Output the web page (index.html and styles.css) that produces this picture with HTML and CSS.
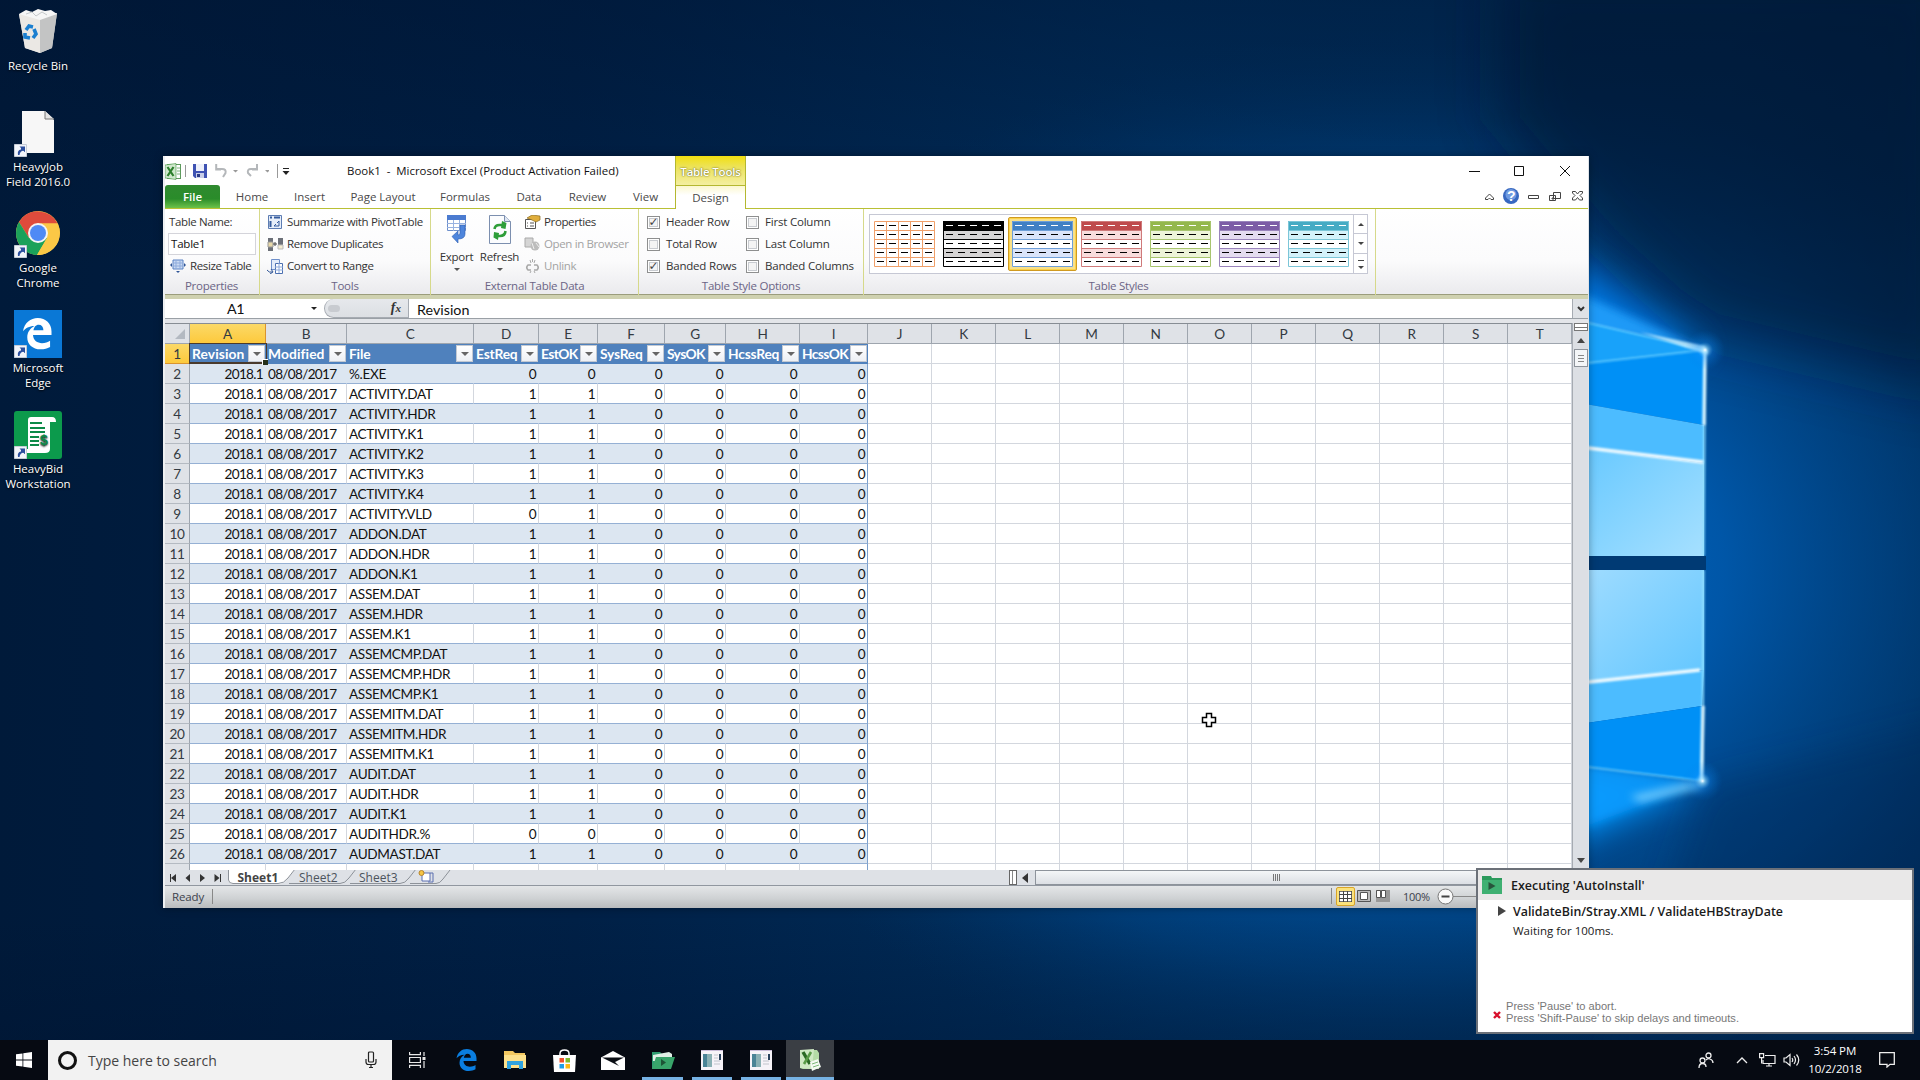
FILE: index.html
```html
<!DOCTYPE html>
<html lang="en">
<head>
<meta charset="utf-8">
<title>Desktop</title>
<link rel="stylesheet" href="styles.css">
</head>
<body>
<svg class="wallpaper" viewBox="0 0 1920 1080" preserveAspectRatio="none">
  <defs>
    <linearGradient id="base" x1="0" x2="1" y1="0" y2="0"><stop offset="0" stop-color="#001a3a"/><stop offset=".3" stop-color="#002046"/><stop offset=".6" stop-color="#002e5c"/><stop offset=".9" stop-color="#00305e"/><stop offset="1" stop-color="#002a54"/></linearGradient>
    <radialGradient id="glow" gradientUnits="userSpaceOnUse" cx="0" cy="0" r="1" gradientTransform="translate(1400 570) scale(720 540)"><stop offset="0" stop-color="#0078e0"/><stop offset=".45" stop-color="#0060ba" stop-opacity=".8"/><stop offset=".75" stop-color="#004c94" stop-opacity=".45"/><stop offset="1" stop-color="#003468" stop-opacity="0"/></radialGradient>
    <linearGradient id="top" x1="0" x2="0" y1="0" y2="1"><stop offset="0" stop-color="#00122e" stop-opacity=".4"/><stop offset=".25" stop-color="#00122e" stop-opacity="0"/><stop offset=".85" stop-color="#00122e" stop-opacity="0"/><stop offset="1" stop-color="#00122e" stop-opacity=".4"/></linearGradient>
    <radialGradient id="spark"><stop offset="0" stop-color="#fff"/><stop offset=".12" stop-color="#9fe0ff" stop-opacity=".7"/><stop offset=".4" stop-color="#1090ff" stop-opacity=".3"/><stop offset="1" stop-color="#0078e0" stop-opacity="0"/></radialGradient>
    <linearGradient id="paleA" x1="0" x2="1" y1="0" y2="1"><stop offset="0" stop-color="#66c8ff"/><stop offset="1" stop-color="#a6e0ff"/></linearGradient>
    <linearGradient id="paleB" x1="0" x2="1" y1="0" y2="1"><stop offset="0" stop-color="#a0dcff"/><stop offset="1" stop-color="#62c6ff"/></linearGradient>
    <filter id="b30" x="-50%" y="-50%" width="200%" height="200%"><feGaussianBlur stdDeviation="30"/></filter>
    <filter id="b20" x="-50%" y="-50%" width="200%" height="200%"><feGaussianBlur stdDeviation="16"/></filter>
    <filter id="b6" x="-50%" y="-50%" width="200%" height="200%"><feGaussianBlur stdDeviation="4"/></filter>
    <filter id="b1"><feGaussianBlur stdDeviation=".8"/></filter>
  </defs>
  <rect width="1920" height="1080" fill="url(#base)"/>
  <rect width="1920" height="1080" fill="url(#glow)"/>
  <rect width="1920" height="1080" fill="url(#top)"/>
  <path d="M1700 330 1960 392V-40L1500-40V120L1600 240Z" fill="#001530" opacity=".6" filter="url(#b30)"/>
  <path d="M1705 785 1960 722V900L1600 1080Z" fill="#002c5c" opacity=".4" filter="url(#b20)"/>
  <path d="M1480 200 1705 350 1480 370Z" fill="#0088ff" opacity=".7" filter="url(#b20)"/>
  <path d="M1480 880 1695 785 1480 750Z" fill="#0098ff" filter="url(#b20)"/>
  <path d="M1560 285 1705 350 1560 325Z" fill="#28a4ff" opacity=".8" filter="url(#b6)"/>
  <path d="M1560 762 1703 782 1560 836Z" fill="#0a9cff" opacity=".8" filter="url(#b6)"/>
  <path d="M1630 796 1703 780 1700 788 1640 802Z" fill="#8ad8ff" opacity=".8" filter="url(#b6)"/>
  <path d="M1580 321 1705 350 1704 425 1580 403Z" fill="#0090f6"/>
  <path d="M1580 321 1705 350 1580 364Z" fill="#18a2fa"/>
  <path d="M1580 403 1704 425V463L1580 447Z" fill="#4cbcff"/>
  <path d="M1580 447 1704 463V556H1580Z" fill="url(#paleA)"/>
  <path d="M1580 570H1704V670L1580 683Z" fill="url(#paleB)"/>
  <path d="M1580 683 1704 670 1702 706 1580 724Z" fill="#4cbcff"/>
  <path d="M1580 724 1702 706V781L1580 765Z" fill="#0090f6"/>
  <g fill="none" filter="url(#b1)"><path d="M1580 447 1703 462M1580 683 1700 670" stroke="#f0fbff" stroke-width="3.500"/>
  <path d="M1580 321 1705 350 1580 364M1580 766 1703 781" stroke="#6cd0ff" stroke-width="1.500"/>
  <path d="M1705 350 1703.500 556M1703.500 570 1702.500 781" stroke="#90e0ff" stroke-width="2"/>
  <path d="M1705 350 1704 425M1703 706 1701.500 781" stroke="#d8f6ff" stroke-width="3.500"/></g>
  <path d="M1580 556H1706V570H1580Z" fill="#003a74"/>
  <path d="M1640 332 1705 346 1708 354 1690 349Z" fill="#c8f0ff" filter="url(#b1)" opacity=".8"/>
  <circle cx="1705" cy="350" r="20" fill="url(#spark)"/><circle cx="1702.500" cy="781" r="20" fill="url(#spark)"/>
</svg>

<main class="desktop">
  <nav class="shortcuts">
    <div class="shortcut">
      <svg class="big" viewBox="0 0 48 48"><path d="M5 6 43 5 38 40 26 45 11 40Z" fill="#d9d9d8"/><path d="M5 6 26 10 26 45 11 40Z" fill="#ebe8e4"/><path d="M26 10 43 5 38 40 26 45Z" fill="#c3c4c4"/><path d="M5 6 12 2 18 4 24 1 31 3 37 2 43 6 26 12Z" fill="#f6f6f6"/><path d="m12 6 6-2 4 4 6-4 5 3" stroke="#c4c8ca" fill="none"/><g fill="none" stroke="#1b7fd0" stroke-width="3.600"><path d="m12 22 3-4 4 1"/><path d="m20 21 2 5-3 4"/><path d="m16 30-5-1 0-4"/></g></svg>
      <span>Recycle Bin</span></div>
    <div class="shortcut">
      <svg class="big" viewBox="0 0 48 48"><path d="M8 2H31L40 11V44H8Z" fill="#f7f7f7"/><path d="M31 2V10H40" fill="#e4e4e4" stroke="#777"/><use href="#arrow"/></svg>
      <span>HeavyJob<br>Field 2016.0</span></div>
    <div class="shortcut">
      <svg class="big" viewBox="0 0 48 48"><circle cx="24" cy="23" r="22" fill="#fbc846"/><path d="M5 12A22 22 0 0 1 43.500 13.500H24L15 28Z" fill="#de4b3c"/><path d="M5 12A22 22 0 0 0 23 45L33 28 15 28Z" fill="#1ba15a"/><path d="M23 45A22 22 0 0 0 43.500 13.500H24A10 10 0 0 1 33 28Z" fill="#fbc846"/><circle cx="24" cy="23" r="10" fill="#f4f4f4"/><circle cx="24" cy="23" r="8" fill="#4f8af5"/><use href="#arrow"/></svg>
      <span>Google<br>Chrome</span></div>
    <div class="shortcut">
      <svg class="big" viewBox="0 0 48 48"><path d="M0 0H48V48H0Z" fill="#0a78d6"/><path transform="translate(9 8) scale(.95)" d="M0 14C1.500 5 8 0 15.500 0 24 0 30 6 30 14V18H10.500C11 24 15 26.500 20 26.500 23.500 26.500 26 25.500 28.500 24V30.500C25.500 32 22.500 33 18.500 33 10 33 4.500 27.500 4.500 20.500 4.500 15 7.500 11 12 8.500 6.500 8.500 2.500 11 0 14ZM11 13H21.500C21.500 9 19.500 7 16.500 7 13.500 7 11.500 9.500 11 13Z" fill="#fff"/><use href="#arrow"/></svg>
      <span>Microsoft<br>Edge</span></div>
    <div class="shortcut">
      <svg class="big" viewBox="0 0 48 48"><rect width="48" height="48" rx="3" fill="#0c9a4c"/><path d="M13 6H38Q42 6 42 11H36V38Q36 42 31 42H12V38H14V9Q14 6 17 6Z" fill="#fff"/><path d="M16 12H28M16 17H31M16 21H31M16 26H25M16 30H25M16 34H25" stroke="#0c8a48" stroke-width="1.800"/><text x="26" y="34" class="dollar">$</text><use href="#arrow"/></svg>
      <span>HeavyBid<br>Workstation</span></div>
  </nav>

  <section class="excel">
    <header class="titlebar">
      <div class="quick">
        <svg width="17" height="17" viewBox="0 0 17 17"><rect x="2.500" y="1.500" width="13" height="14" fill="#fff" stroke="#5d9a5d"/><path d="M0 2 11 .5V16.500L0 15Z" fill="#cfe8cc" stroke="#3c8f3c" stroke-width=".6"/><path d="m2.500 4 6 9M8.500 4l-6 9" stroke="#2c7f2c" stroke-width="2.200"/><path d="M12 5h3M12 8h3M12 11h3" stroke="#7cb57c"/></svg>
        <i class="bar"></i>
        <svg class="save" width="14" height="14" viewBox="0 0 14 14"><path d="M0 0H14V14H2L0 12Z" fill="#3f53b3"/><path d="M3 0H11V7H3Z" fill="#eef1fb"/><path d="M3 9H11V14H3Z" fill="#c9cfe8"/><path d="M4 10H7V13H4Z" fill="#2b3a86"/></svg>
        <svg class="undo" width="54" height="14" viewBox="0 0 54 14"><g fill="none" stroke="#b4b7ba" stroke-width="2"><path d="M2 5H7Q11.500 5 10.500 9L8 13"/><path d="M1.200 0V5.500H6"/><path d="M41 5H36Q32 5 33 9L36 12"/><path d="M42 0V5.500H37"/></g><path d="M18 6h5l-2.500 2.500ZM50 6h5l-2.500 2.500Z" fill="#999"/></svg>
        <i class="bar"></i>
        <svg class="cust" width="8" height="8" viewBox="0 0 8 8"><path d="M1 .5H7" stroke="#222"/><path d="M.5 3h7L4 7Z" fill="#222"/></svg>
      </div>
      <div class="doc-title">Book1&nbsp; -&nbsp; Microsoft Excel (Product Activation Failed)</div>
      <div class="tool-tab">Table Tools</div>
      <svg class="win-btns" width="100" height="12" viewBox="0 0 100 12"><g fill="none" stroke="#111"><path d="M0 6.500H11"/><path d="M45.500 1.500h9v9h-9Z"/><path d="m91 1 10 10M101 1 91 11"/></g></svg>
    </header>
    <nav class="tabs">
      <b class="file">File</b><span class="t-home">Home</span><span class="t-ins">Insert</span><span class="t-page">Page Layout</span><span class="t-form">Formulas</span><span class="t-data">Data</span><span class="t-rev">Review</span><span class="t-view">View</span><span class="t-design">Design</span>
      <svg class="doc-btns" width="100" height="18" viewBox="0 0 100 18"><g fill="none" stroke="#444"><path d="m1.500 10 4-4 4 4v1.500h-2.500l-1.500-1.500-1.500 1.500h-2.500Z"/><path d="M44.500 7.500h10v3h-10Z"/><path d="M69.500 4.500h7v6h-7ZM65.500 7.500h6v5h-6ZM68 10h2v1h-2Z"/><path d="M88.500 3.500h3l2 2.500 2-2.500h3v1.500l-2.500 2.500 2.500 2.500v2h-3l-2-2.500-2 2.500h-3v-2l2.500-2.500-2.500-2.500Z"/></g><circle cx="27" cy="8" r="8" fill="#3868c0"/><circle cx="27" cy="6.500" r="5.500" fill="#6f9ae0"/><text x="23" y="13" class="q">?</text></svg>
    </nav>

    <div class="ribbon">
      <div class="group g-prop">
        <div class="col"><span>Table Name:</span><span class="field">Table1</span>
          <span class="cmd"><svg width="16" height="14" viewBox="0 0 16 14"><path d="M3 1H13V10H3Z" fill="#c9d9f2" stroke="#5b82c4"/><path d="M3 4H13M3 7H13M6 1V10M10 1V10" stroke="#8fabdc"/><path d="M0 6 2 4V8ZM16 6 14 4V8ZM8 14 6 12H10Z" fill="#2f5597"/></svg>Resize Table</span></div>
        <footer>Properties</footer>
      </div>
      <div class="group g-tools">
        <div class="col">
          <span class="cmd"><svg width="17" height="14" viewBox="-1 0 17 14"><path d="M.5.500h13v13h-13Z" fill="#e7eef9" stroke="#5d7db3"/><path d="M2 2.500h2M6 2.500h6M2.500 6v6" stroke="#345a9c" stroke-width="2"/><path d="M6 11h5V6M6 11l2-2M11 6 9 8" stroke="#345a9c" fill="none"/></svg>Summarize with PivotTable</span>
          <span class="cmd"><svg width="17" height="15" viewBox="0 0 17 15"><path d="M1 1H6V5H1ZM1 10H6V14H1Z" fill="#6c7078"/><path d="M1 5H6V10H1Z" fill="#e8d8a8" stroke="#999"/><path d="M11 1H16V8H11Z" fill="#6c7078"/><path d="M11 8H16V12H11Z" fill="#f4ecd0" stroke="#bbb"/><path d="M6 7H10M8 5V9" stroke="#444"/></svg>Remove Duplicates</span>
          <span class="cmd"><svg width="17" height="15" viewBox="0 0 17 15"><path d="M4.500.500h8v10h-8Z" fill="#e3ecfa" stroke="#6e8fca"/><path d="M8.500 4.500h7v10h-7Z" fill="#fff" stroke="#4b6fb0"/><path d="M8 8h8M8 11h8M12 4v10" stroke="#8fabdc"/><path d="M0 11q2 3 5 2M4 10l2 3-3 2" stroke="#2f5597" fill="none"/></svg>Convert to Range</span></div>
        <footer>Tools</footer>
      </div>
      <div class="group g-ext">
        <div class="row">
          <div class="large"><svg width="20" height="29" viewBox="0 0 20 29"><path d="M.5.500h18v15h-18Z" fill="#fff" stroke="#6d8fcb"/><path d="M0 0H19V5H0Z" fill="#4b7bd0"/><path d="M0 8.500H19M0 12.500H19M6.500 5V16M12.500 5V16" stroke="#98b2e0"/><path d="M13 10H18V19Q18 24 11 24V28L5 21.500 11 16V20Q13 20 13 18Z" fill="#4f86dc" stroke="#2c5cb0" stroke-width=".6"/></svg><span>Export</span><i class="dd"></i></div>
          <div class="large"><svg width="22" height="29" viewBox="0 0 22 29"><path d="M.5.500h15l6 6v22h-21Z" fill="#fbfcfe" stroke="#7c8faf"/><path d="M15.500.500v6h6" fill="#dfe7f3" stroke="#7c8faf"/><g fill="none" stroke="#2e9e3a" stroke-width="2.600"><path d="M5.500 14Q6 10 10.500 10H14"/><path d="M16.500 16Q16 21 11 21H8"/></g><path d="M13 6 17.500 8 16.500 14 12 13ZM9 25 4.500 22.500 5 17 10 18Z" fill="#2e9e3a"/></svg><span>Refresh</span><i class="dd"></i></div>
          <div class="col">
            <span class="cmd"><svg width="17" height="14" viewBox="0 0 17 14"><path d="M1.500 4.500h10v9h-10Z" fill="#fff" stroke="#555"/><path d="M3 8h1M6 8h4M3 11h1M6 11h4" stroke="#555"/><path d="M3 3 8 0 16 1V5L12 7 8 5Z" fill="#e0ae3c" stroke="#8a6a20" stroke-width=".7"/></svg>Properties</span>
            <span class="cmd off"><svg width="17" height="15" viewBox="0 0 17 15"><path d="M1 1H9V10H1Z" fill="#d5d5d5" stroke="#aaa"/><circle cx="11" cy="9" r="4.500" fill="#bcbcbc"/><path d="m8 6 2 6M12 6l3 4" stroke="#eee"/></svg>Open in Browser</span>
            <span class="cmd off"><svg width="17" height="15" viewBox="0 0 17 15"><g fill="none" stroke="#a8a8a8" stroke-width="1.600"><path d="M7 6H4Q1.500 8.500 4 11H7M10 6H13Q15.500 8.500 13 11H10"/><path d="M6 1 7 4M11 1 10 4M6 14 7 12M11 14 10 12M8.500 0V3" stroke-width="1"/></g></svg>Unlink</span></div>
        </div>
        <footer>External Table Data</footer>
      </div>
      <div class="group g-opt">
        <div class="row">
          <div class="col"><span class="chk"><i class="on">✓</i>Header Row</span><span class="chk"><i></i>Total Row</span><span class="chk"><i class="on">✓</i>Banded Rows</span></div>
          <div class="col"><span class="chk"><i></i>First Column</span><span class="chk"><i></i>Last Column</span><span class="chk"><i></i>Banded Columns</span></div>
        </div>
        <footer>Table Style Options</footer>
      </div>
      <div class="group g-styles">
        <div class="gallery">
          <div class="thumbs" id="thumbs"></div>
          <div class="steps"><i class="up"></i><i class="down"></i><i class="more"></i></div>
        </div>
        <footer>Table Styles</footer>
      </div>
    </div>

    <div class="formula">
      <div class="namebox"><span>A1</span><i class="dd"></i></div>
      <div class="fx"><i class="knob"></i><em>f<small>x</small></em></div>
      <div class="value">Revision</div>
      <div class="expand"><svg width="8" height="6" viewBox="0 0 8 6"><path d="m1 1 3 3 3-3" fill="none" stroke="#333" stroke-width="2"/></svg></div>
    </div>

    <div class="body">
      <div class="sheet" id="sheet"></div>
      <div class="vscroll"><i class="split"></i><i class="tri up"></i><i class="vthumb"></i><i class="tri down"></i></div>
    </div>

    <div class="sheetbar">
      <svg width="52" height="8" viewBox="0 0 52 8"><path d="M.500 0V8M50.500 0V8" stroke="#333"/><path d="M6 0V8L1 4ZM20 0V8L15.500 4ZM30 0V8L35 4ZM44.500 0V8L49.500 4Z" fill="#333"/></svg>
      <svg class="sheet-tabs" width="228" height="16" viewBox="0 0 228 16"><path d="M0 0H67L61 8Q56 15 50 15H4Q1 15 0 10Z" fill="#fff"/><g fill="none" stroke="#8d9299"><path d="M.5 0V11Q1 14.500 5 14.500H50Q56 14.500 60 9L67 0M61 14.500H112Q117 14.500 121 9L128 0M122 14.500H172Q177 14.500 181 9L188 0M182 14.500H208Q212 14.500 215 10L222 1"/></g>
        <path d="M194 4H202V12H194Z" fill="#fff" stroke="#5a6fb0"/><path d="M200 13H205V4H202" stroke="#5a6fb0" fill="none"/><circle cx="193.500" cy="4" r="2.500" fill="#f6c544" stroke="#b8862b"/>
        <text x="9.500" y="12.500" class="s1">Sheet1</text><text x="71" y="12.500" class="s2">Sheet2</text><text x="131" y="12.500" class="s2">Sheet3</text></svg>
      <div class="hscroll"><i class="hsplit"></i><i class="left"></i><i class="hthumb"><b></b></i></div>
    </div>

    <footer class="status">
      <span class="ready">Ready</span>
      <div class="views">
        <i class="vbtn"><svg width="13" height="11" viewBox="0 0 13 11"><path d="M0 0H13V11H0Z" fill="#fff" stroke="#444" stroke-width="1.600"/><path d="M0 3.500H13M0 7.500H13M4.500 0V11M8.500 0V11" stroke="#444"/></svg></i>
        <svg width="14" height="12" viewBox="0 0 14 12"><path d="M.5.500h13v11h-13Z" fill="#bbb" stroke="#555"/><path d="M3.500 2.500h7v7h-7Z" fill="#fff" stroke="#555"/></svg>
        <svg width="14" height="12" viewBox="0 0 14 12"><path d="M0 0H14V12H0Z" fill="#999"/><path d="M.5.500h4v7h-4ZM5.500.500h4v7h-4Z" fill="#fff" stroke="#555"/></svg>
        <span>100%</span>
        <svg width="62" height="17" viewBox="0 0 62 17"><path d="M16 8.500H62" stroke="#888"/><circle cx="8.500" cy="8.500" r="7.500" fill="#fafafa" stroke="#777"/><path d="M4.500 8.500h8" stroke="#444" stroke-width="2"/></svg>
      </div>
    </footer>
  </section>

  <svg class="cursor" viewBox="0 0 16 16"><path d="M5.500 1.500h5v4h4v5h-4v4h-5v-4h-4v-5h4Z" fill="#fff" stroke="#000" stroke-width="1.500"/></svg>

  <aside class="toast">
    <header><svg width="20" height="18" viewBox="0 0 20 18"><path d="M0 0H9L10 2H20V18H0Z" fill="#2c9a5c"/><path d="M0 4H20V18H0Z" fill="#3fb072"/><path d="M6.500 6v8l7-4Z" fill="#28543c"/></svg>Executing 'AutoInstall'</header>
    <div class="task"><i></i><div><strong>ValidateBin/Stray.XML / ValidateHBStrayDate</strong><p>Waiting for 100ms.</p></div></div>
    <div class="hint"><svg width="8" height="8" viewBox="0 0 8 8"><path d="m1 1 6 6M7 1 1 7" stroke="#d8102c" stroke-width="2.400"/></svg><p>Press 'Pause' to abort.<br>Press 'Shift-Pause' to skip delays and timeouts.</p></div>
  </aside>
</main>

<footer class="taskbar">
  <div class="start"><svg width="16" height="16" viewBox="0 0 16 16"><path d="M0 2.300 6.500 1.400V7.600H0ZM7.300 1.300 16 0V7.600H7.300ZM0 8.400H6.500V14.600L0 13.700ZM7.300 8.400H16V16L7.300 14.700Z" fill="#fff"/></svg></div>
  <div class="search"><i class="ring"></i><span>Type here to search</span>
    <svg width="12" height="18" viewBox="0 0 12 18"><g fill="none" stroke="#222" stroke-width="1.200"><rect x="3.500" y="1" width="5" height="10" rx="1"/><path d="M1 8V11Q1 13.500 3.500 13.500H8.500Q11 13.500 11 11V8M6 13.500V17M4 16.500H8"/></g></svg></div>
  <div class="apps">
    <div><svg width="17" height="16" viewBox="0 0 17 16"><g fill="none" stroke="#e8e8e8" stroke-width="1.200"><path d="M.6 0V2.600H11.400V0M.6 16V13.400H11.400V16M.6 5.500h10.800v5H.6Z"/><path d="M15 0V4M15 9V16"/></g><path d="M13.500 5H16.500V8H13.500Z" fill="#e8e8e8"/></svg></div>
    <div><svg width="21" height="22" viewBox="0 0 30 33"><path d="M0 14C1.500 5 8 0 15.500 0 24 0 30 6 30 14V18H10.500C11 24 15 26.500 20 26.500 23.500 26.500 26 25.500 28.500 24V30.500C25.500 32 22.500 33 18.500 33 10 33 4.500 27.500 4.500 20.500 4.500 15 7.500 11 12 8.500 6.500 8.500 2.500 11 0 14ZM11 13H21.500C21.500 9 19.500 7 16.500 7 13.500 7 11.500 9.500 11 13Z" fill="#0a7ee0"/></svg></div>
    <div><svg width="22" height="18" viewBox="0 0 22 18"><path d="M0 0H9L11 2H21V17H0Z" fill="#f3c860"/><path d="M0 4H22V17H0Z" fill="#fde18c"/><path d="M3 10H19V18H15V14H7V18H3Z" fill="#2fa3e0"/></svg></div>
    <div><svg width="23" height="23" viewBox="0 0 23 23"><path d="M7 7V4.500Q7 1 11.500 1T16 4.500V7" fill="none" stroke="#fff" stroke-width="1.500"/><path d="M0 6H23L22 23H1Z" fill="#fff"/><path d="M6.500 9H11V13.500H6.500Z" fill="#f0502c"/><path d="M12.500 9H17V13.500H12.500Z" fill="#7fba2c"/><path d="M6.500 15H11V19.500H6.500Z" fill="#1f9ee8"/><path d="M12.500 15H17V19.500H12.500Z" fill="#fdb913"/></svg></div>
    <div><svg width="24" height="19" viewBox="0 0 24 19"><path d="M0 6.500 12 0 24 6.500V19H0Z" fill="#fff"/><path d="M1 6.500H23L14 11 18 15 9 10.500Z" fill="#0a0e14"/></svg></div>
    <div class="run"><svg width="24" height="19" viewBox="0 0 24 19"><path d="M1 1H9L11 3H20V18H1Z" fill="#2f9c70"/><path d="M2 4 18 1 21 3V10H2Z" fill="#e0f0e6"/><path d="M5 6H24L20 18H1Z" fill="#38a46a"/><path d="m10 8v7l5-3.500Z" fill="#1d5436"/></svg></div>
    <div class="run"><svg width="22" height="20" viewBox="0 0 22 20"><use href="#app"/></svg></div>
    <div class="run"><svg width="22" height="20" viewBox="0 0 22 20"><use href="#app"/></svg></div>
    <div class="run active"><svg width="22" height="22" viewBox="0 0 22 22"><path d="M1 1H18L20 4V20H4L1 19Z" fill="#b4dba6"/><path d="M1 1 15 0 13 20 1 19Z" fill="#cfe9c4"/><path d="M4 3 11 15" stroke="#2a6a24" stroke-width="3.400"/><path d="M12 3 5 15" stroke="#5a9c48" stroke-width="2.600"/><path d="m11 13 8-3 3 8-9 4Z" fill="#f4faf2"/><path d="M13 15l6-2M14 18l6-2" stroke="#7cb878"/></svg></div>
  </div>
  <div class="tray">
    <svg width="16" height="17" viewBox="0 0 16 17"><g fill="none" stroke="#eee" stroke-width="1.300"><circle cx="10.500" cy="3.500" r="2.500"/><circle cx="4.500" cy="8.500" r="2.500"/><path d="M1 16Q1 11.500 4.500 11.500T8 15M8 8Q10 6 12 7 15 8 15 11"/></g></svg>
    <svg class="chev" width="12" height="8" viewBox="0 0 12 8"><path d="m1 7 5-5 5 5" fill="none" stroke="#eee" stroke-width="1.300"/></svg>
    <svg class="net" width="17" height="14" viewBox="0 0 17 14"><g fill="none" stroke="#eee" stroke-width="1.200"><path d="M6 2.500H16V10.500H4V7M7 13H13M10 10.500V13"/><path d="M.6.600h4v4h-4ZM2.600 4.600v6"/></g></svg>
    <svg class="vol" width="17" height="14" viewBox="0 0 17 14"><g fill="none" stroke="#eee" stroke-width="1.200"><path d="M1 5H3L7 1.500V12.500L3 9H1ZM9 5Q10.500 7 9 9M11 3Q14 7 11 11M13.500 1.500Q18 7 13.500 12.500"/></g></svg>
    <time>3:54 PM<br>10/2/2018</time>
    <svg class="note" width="16" height="16" viewBox="0 0 16 16"><path d="M.7.700H15.300V12.300H11L8 15 8 12.300H.7Z" fill="none" stroke="#eee" stroke-width="1.300"/></svg>
  </div>
</footer>

<svg class="defs" aria-hidden="true">
  <symbol id="arrow" viewBox="0 0 48 48"><path d="M.5 35.500H12.500V47.500H.5Z" fill="#f2f5fa" stroke="#c6ccd6"/><path d="M4 46Q3 41 7 40.500V38H11V43L9.500 41.800Q6 42 5.500 46Z" fill="#2c4f9e"/><path d="M5.500 37.500H11V43Z" fill="#2c4f9e"/></symbol>
  <symbol id="app" viewBox="0 0 22 20"><path d="M0 0H22V20H0Z" fill="#f6f3f8"/><path d="M0 .5H22" stroke="#c9bcd8"/><path d="M2 4H11V17H2Z" fill="#4a8496"/><path d="M6 4H11V17H6Z" fill="#8ab0b4"/><path d="M13 5H17M13 8H17M13 11H19M13 14H19" stroke="#c0c4cc"/><path d="M18 4H20V10H18Z" fill="#27405c"/></symbol>
</svg>
<script src="app.js"></script>
</body>
</html>
```
FILE: styles.css
```css
* { box-sizing: border-box; }
body { margin: 0; width: 1920px; height: 1080px; overflow: hidden; position: relative; display: flex; flex-direction: column; font: 11.5px/15px "Open Sans", "Noto Sans", sans-serif; color: #333; background: #001a3a; }
svg { display: block; flex: none; }
i { font-style: normal; }
.defs { position: absolute; width: 0; height: 0; }
.wallpaper { position: absolute; inset: 0; width: 1920px; height: 1080px; }
.desktop { position: relative; height: 1040px; }

.shortcuts { display: flex; flex-direction: column; width: 76px; padding-top: 8px; }
.shortcut { height: 100.75px; display: flex; flex-direction: column; align-items: center; gap: 2px; color: #fff; text-align: center; text-shadow: 0 1px 2px #000; white-space: nowrap; }
.big { width: 48px; height: 48px; }
.dollar { font: bold 14px "Liberation Sans", sans-serif; fill: #0c8a48; }

.excel { position: absolute; left: 163px; top: 156px; width: 1426px; height: 752px; background: #fff; border-left: 2px solid #eef0f2; border-right: 1px solid #dfe3e8; display: flex; flex-direction: column; overflow: hidden; box-shadow: 0 0 8px rgba(0,0,0,.35); }
.titlebar { height: 29px; display: flex; align-items: stretch; flex: none; }
.quick { width: 182px; display: flex; align-items: center; padding-top: 1px; }
.bar { width: 1px; height: 12px; background: #999; margin-left: 3px; }
.save { margin-left: 7px; }
.undo { margin-left: 8px; }
.undo + .bar { margin-left: 8px; height: 14px; }
.cust { margin-left: 4px; margin-top: 2px; }
.doc-title { width: 328px; line-height: 30px; color: #111; white-space: nowrap; font-size: 11.450px; }
.tool-tab { width: 71px; border: solid #b4b830; border-width: 0 1px; background: linear-gradient(#f2df10, #ece35e 40%, #f4efa0); color: #fff; text-align: center; line-height: 31px; font-weight: 600; text-shadow: 0 0 2px #6c6a20, 0 0 1px #8a8830; white-space: nowrap; letter-spacing: -.2px; }
.win-btns { margin: 9px 0 0 723px; overflow: visible; }
.tabs { height: 24px; display: flex; position: relative; border-bottom: 1px solid #b9c035; flex: none; color: #4a4a4a; line-height: 24px; text-align: center; }
.tabs > * { flex: none; }
.file { width: 55px; background: linear-gradient(#2f8a2f, #2a8c2a 60%, #6cc24a); border-radius: 3px 3px 0 0; color: #fff; font-weight: 600; }
.t-home { width: 64px; } .t-ins { width: 51px; } .t-page { width: 96px; } .t-form { width: 68px; } .t-data { width: 60px; } .t-rev { width: 57px; } .t-view { width: 59px; }
.t-design { width: 71px; height: 24px; background: linear-gradient(#fbf8cf, #fff 40%); border: solid #b4b830; border-width: 1px 1px 0; line-height: 23px; }
.doc-btns { margin: 3px 0 0 738px; }
.q { font: bold 14px "Liberation Sans", sans-serif; fill: #fff; }

.ribbon { height: 90px; flex: none; display: flex; background: linear-gradient(#fff, #fbfbfc 60%, #ececef 95%); border-bottom: 4px solid #cfd1b0; box-shadow: inset 0 -1px #9b9d7d; }
.group { height: 86px; display: flex; flex-direction: column; justify-content: space-between; border-right: 1px solid #d6d98a; padding: 2px 0 0; letter-spacing: -.25px; }
.group footer { height: 16px; line-height: 14px; text-align: center; color: #6b6485; }
.col { display: flex; flex-direction: column; white-space: nowrap; line-height: 22px; letter-spacing: -.37px; }
.col > span { height: 22px; }
.row { display: flex; }
.cmd { display: flex; align-items: center; gap: 3px; }
.off { color: #a3a3a3; }
.g-prop { width: 95px; padding-left: 4px; }
.g-prop footer { padding-right: 5px; }
.field { width: 88px; border: 1px solid #d4d4da; background: #fff; line-height: 20px; padding-left: 2px; margin-left: -1px; color: #111; letter-spacing: -.2px; }
.g-prop .cmd { gap: 4px; padding-left: 1px; }
.g-tools { width: 171px; padding-left: 7px; }
.g-tools footer { padding-right: 7px; }
.g-ext { width: 208px; }
.g-ext .row { padding-left: 4px; }
.g-ext .col { margin-left: 3px; }
.large { width: 43px; display: flex; flex-direction: column; align-items: center; padding-top: 4px; }
.large span { margin-top: 5px; }
.dd { width: 0; height: 0; border: solid transparent; border-width: 3px 3px 0; border-top-color: #555; }
.large .dd { margin-top: 4px; }
.g-opt { width: 225px; }
.g-opt .row { padding-left: 8px; }
.g-opt .col { letter-spacing: -.2px; }
.g-opt .col:first-child { width: 99px; }
.chk { display: flex; align-items: center; gap: 6px; }
.chk i { width: 13px; height: 13px; border: 1px solid #8e8f8f; background: #f4f4f4; box-shadow: inset 0 0 0 1px #fff, inset 0 0 0 2px #c8cbd0; font: bold 12px/11px "DejaVu Sans", sans-serif; color: #444; text-align: center; }
.g-styles { width: 512px; padding: 5px 7px 0 5px; }
.gallery { height: 60px; display: flex; border: 1px solid #c6c8d4; background: #fff; }
.thumbs { flex: 1; display: flex; padding: 2px 0 0; }
.thumb { width: 69px; height: 54px; flex: none; padding: 4px; border-radius: 2px; }
.thumb.sel { background: #f8e08a; border: 1px solid #d09a20; padding: 3px; box-shadow: inset 0 0 0 1px #fbd34a; }
.steps { width: 15px; border-left: 1px solid #c6c8d4; display: grid; grid-template-rows: 1fr 1fr 1fr; }
.steps i { display: grid; place-items: center; border-bottom: 1px solid #c6c8d4; }
.steps i:last-child { border: 0; }
.steps i::after { content: ""; border: solid transparent; border-width: 3px 3px 0; border-top-color: #444; }
.steps .up::after { border-width: 0 3px 3px; border-bottom-color: #444; }
.steps .more::before { content: ""; width: 6px; height: 1px; background: #444; margin-bottom: -6px; }

.formula { height: 20px; flex: none; display: flex; border-bottom: 1px solid #9aa0a6; background: #fff; font: 14.300px/21px Lato, sans-serif; color: #111; }
.namebox { width: 159px; display: flex; align-items: center; }
.namebox span { width: 141px; text-align: center; letter-spacing: -.5px; }
.namebox .dd { margin-left: 5px; border-top-color: #222; }
.fx { width: 85px; background: linear-gradient(#e6e8ec, #dcdfe3); border: 1px solid #a6abb2; border-top: 0; border-radius: 10px 0 0 10px; display: flex; align-items: center; justify-content: space-between; padding: 0 7px 0 3px; }
.knob { width: 12px; height: 7px; border-radius: 6px; background: #c8cbd0; }
.fx em { font: italic bold 14px "Liberation Serif", serif; color: #333; }
.fx small { font-size: 11px; }
.value { flex: 1; padding-left: 8px; }
.expand { width: 16px; display: grid; place-items: center; background: #dfe2e6; border-left: 1px solid #a6abb2; }

.body { height: 551px; flex: none; display: flex; padding-top: 4px; background: #e3e5e9; border-bottom: 1px solid #9197a0; }
.sheet { width: 1407px; height: 547px; overflow: hidden; border-top: 1px solid #878d94; display: grid; grid-template-columns: 25px 76px 81px 127px 65px 59px 67px 61px 74px 68px repeat(11, 64px); grid-auto-rows: 20px; position: relative; background: #fff; font: 13.600px/20px Lato, sans-serif; color: #111; }
.c { border: solid #d3d7de; border-width: 0 1px 1px 0; white-space: nowrap; overflow: hidden; padding: 0 2px; letter-spacing: -.35px; }
.hd, .rh { background: #dfe2e7; border-color: #9ea5ae; text-align: center; color: #333a42; }
.hd { line-height: 21px; }
.rh { border-bottom-color: #b4bac2; }
.hot { background: linear-gradient(#fbd968, #fdc93c); border-color: #d9932e; }
.corner { display: flex; justify-content: flex-end; align-items: flex-end; padding: 4px; }
.corner::after { content: ""; border: solid transparent; border-width: 0 0 10px 10px; border-bottom-color: #b3b9c1; }
.t { border-bottom-color: #95b0d4; }
.date, .num { letter-spacing: -.7px; }
.band { background: #dce6f1; border-right-color: #dce6f1; }
.num { text-align: right; }
.last { border-right-color: #7ba0cd; }
.th { background: #4f81bd; border-color: #4f81bd; color: #fff; font-weight: 700; font-size: 13.800px; display: flex; justify-content: space-between; padding: 0 0 0 2px; letter-spacing: -.2px; }
.th.wide { letter-spacing: .1px; }
.th.narrow { letter-spacing: -.6px; }
.th i { width: 17px; height: 17px; margin: 1px 0 0; background: linear-gradient(#fff, #edf0f5); border: 1px solid #c3c9d2; display: grid; place-items: center; flex: none; }
.th i::after { content: ""; border: solid transparent; border-width: 4px 4px 0; border-top-color: #666; }
.select { position: absolute; left: 24px; top: 19px; width: 78px; height: 21px; border: solid #4a3a2c; border-width: 1px 1px 2px 1px; }
.select::after { content: ""; position: absolute; right: -2px; bottom: -3px; width: 5px; height: 5px; background: #25301c; border: solid #fff; border-width: 1px 0 0 1px; }
.vscroll { flex: 1; background: #dcdfe4; border-left: 1px solid #a6abb2; display: flex; flex-direction: column; align-items: center; }
.split { width: 14px; height: 8px; border: 1px solid #777; background: linear-gradient(#fff 3px, #777 3px 4px, #fff 4px); }
.tri { border: solid transparent; }
.tri.up { border-width: 0 4px 5px; border-bottom-color: #444; margin-top: 7px; }
.tri.down { border-width: 5px 4px 0; border-top-color: #444; margin-top: auto; margin-bottom: 6px; }
.vthumb { width: 14px; height: 18px; margin-top: 6px; border: 1px solid #8d939b; background: repeating-linear-gradient(transparent 0 2px, #888 2px 3px, transparent 3px 3px) 3px 3px / 6px 9px no-repeat, #f4f6f8; }

.sheetbar { height: 16px; flex: none; display: flex; align-items: center; background: #dee1e6; border-bottom: 1px solid #9197a0; padding-left: 5px; }
.sheet-tabs { margin-left: 6px; margin-top: -1px; }
.s1, .s2 { font: 700 12px "Open Sans", sans-serif; fill: #444; }
.s2 { font-weight: 400; fill: #4c535c; }
.hscroll { margin-left: auto; width: 579px; height: 15px; display: flex; align-items: center; }
.hsplit { width: 8px; height: 15px; border: 1px solid #666; background: linear-gradient(90deg, #fff 2px, #888 2px 3px, #fff 3px); }
.left { border: solid transparent; border-width: 5px 6px 5px 0; border-right-color: #333; margin: 0 7px 0 5px; }
.hthumb { flex: 1; height: 15px; border: 1px solid #8d939b; background: linear-gradient(#f4f6f8, #dcdfe4); display: flex; align-items: center; padding-left: 237px; }
.hthumb b { width: 8px; height: 7px; background: repeating-linear-gradient(90deg, #777 0 1px, transparent 1px 2px); }
.status { flex: 1; display: flex; justify-content: space-between; align-items: center; padding-bottom: 2px; background: linear-gradient(#e4e6e8, #cfd2d4 55%, #b9bbbd); color: #3c424c; }
.ready { width: 48px; padding-left: 7px; border-right: 1px solid #888; line-height: 15px; letter-spacing: -.15px; }
.views { display: flex; align-items: center; gap: 5px; border-left: 1px solid #888; width: 257px; height: 16px; padding-left: 4px; white-space: nowrap; }
.views span { margin: 0 2px 0 8px; font-size: 11px; letter-spacing: -.3px; }
.vbtn { width: 19px; height: 19px; background: #fbe27c; border: 1px solid #d9a528; border-radius: 2px; display: grid; place-items: center; margin-right: -3px; }

.cursor { position: absolute; left: 1201px; top: 712px; width: 16px; height: 16px; }

.toast { position: absolute; left: 1476px; top: 868px; width: 438px; height: 166px; border: 2px solid #6b7078; background: #fff; color: #1a1a1a; display: flex; flex-direction: column; }
.toast header { height: 30px; background: #e9e8e8; display: flex; align-items: center; gap: 9px; padding-left: 4px; font-size: 12.500px; font-weight: 600; flex: none; }
.toast p { margin: 0; }
.task { display: flex; padding: 4px 0 0 20px; gap: 7px; }
.task > i { border: solid transparent; border-width: 5px 0 5px 8px; border-left-color: #444; height: 0; margin-top: 2px; }
.task strong { display: block; font-weight: 600; font-size: 12.400px; }
.task p { margin-top: 4px; }
.hint { margin-top: auto; display: flex; align-items: center; gap: 5px; padding: 0 0 8px 15px; font: 11.100px/12px "Liberation Sans", sans-serif; color: #777; }
.hint svg { margin-top: 6px; }

.taskbar { position: relative; height: 40px; display: flex; background: #060a12; color: #fff; }
.start { width: 48px; display: grid; place-items: center; }
.search { width: 344px; background: #f2f2f2; display: flex; align-items: center; padding: 0 15px 0 10px; color: #444; font-size: 14px; }
.ring { width: 19px; height: 19px; border: 3px solid #111; border-radius: 50%; margin-right: 11px; }
.search span { flex: 1; }
.apps { display: flex; }
.apps > div { width: 49.100px; display: grid; place-items: center; position: relative; }
.apps svg { margin-left: 1px; }
.run::after { content: ""; position: absolute; left: 5px; right: 4px; bottom: 0; height: 3px; background: #76b2e4; }
.apps .active { background: #3a3e44; width: 48px; margin-left: 1px; }
.active::after { left: 0; right: 0; }
.tray { margin-left: auto; display: flex; align-items: center; margin-right: 25px; }
.chev { margin-left: 22px; } .net { margin-left: 11px; } .vol { margin-left: 7px; }
.tray time { width: 54px; margin: 0 17px 0 8px; text-align: center; line-height: 18px; white-space: nowrap; letter-spacing: -.1px; }
```
FILE: app.js
```js
const files = ["%.EXE", "ACTIVITY.DAT", "ACTIVITY.HDR", "ACTIVITY.K1", "ACTIVITY.K2", "ACTIVITY.K3", "ACTIVITY.K4", "ACTIVITY.VLD", "ADDON.DAT", "ADDON.HDR", "ADDON.K1", "ASSEM.DAT", "ASSEM.HDR", "ASSEM.K1", "ASSEMCMP.DAT", "ASSEMCMP.HDR", "ASSEMCMP.K1", "ASSEMITM.DAT", "ASSEMITM.HDR", "ASSEMITM.K1", "AUDIT.DAT", "AUDIT.HDR", "AUDIT.K1", "AUDITHDR.%", "AUDMAST.DAT"];
const est = { "%.EXE": [0, 0], "ACTIVITY.VLD": [0, 1], "AUDITHDR.%": [0, 0] };
const cols = "ABCDEFGHIJKLMNOPQRST".split("");
const heads = ["Revision", "Modified", "File", "EstReq", "EstOK", "SysReq", "SysOK", "HcssReq", "HcssOK"];
const align = [" num", " date", ""];
const cell = (cls, html = "") => `<div class="c ${cls}">${html}</div>`;
const blanks = cell("").repeat(11);

let out = cell("hd corner") + cols.map((c, i) => cell(i ? "hd" : "hd hot", c)).join("");
out += cell("rh hot", "1") + heads.map((h, i) => cell("th" + (i < 2 ? " wide" : h.endsWith("OK") ? " narrow" : ""), `<span>${h}</span><i></i>`)).join("") + blanks;
files.forEach((f, i) => {
  const row = ["2018.1", "08/08/2017", f, ...(est[f] || [1, 1]), 0, 0, 0, 0];
  out += cell("rh", i + 2);
  row.forEach((v, c) => {
    out += cell(`t${i % 2 ? "" : " band"}${align[c] ?? " num"}${c === 8 ? " last" : ""}`, v);
  });
  out += blanks;
});
out += cell("rh") + cell("t").repeat(8) + cell("t last") + blanks;
document.getElementById("sheet").innerHTML = out + '<div class="select"></div>';

const styles = [
  ["#f0a06a", "#fff", "#fff", "#000"],
  ["#000", "#000", "#d6d4d4", "#fff"],
  ["#6f9fd8", "#4080c4", "#dae4fa", "#fff"],
  ["#cf7a7a", "#bf4a4c", "#f8dcdc", "#fff"],
  ["#a8c56e", "#94b84c", "#edf4d8", "#fff"],
  ["#9a84bc", "#7c5ca6", "#e4dcf0", "#fff"],
  ["#7cc6d8", "#45abc4", "#d4f2fa", "#fff"]
];
document.getElementById("thumbs").innerHTML = styles.map(([line, head, band, dash], n) => {
  let s = `<rect width="61" height="46" fill="#fff"/><rect width="61" height="10" fill="${head}"/><path d="M0 10H61V19H0ZM0 28H61V37H0Z" fill="${band}"/><path d="M.5.5H60.5V45.500H.5ZM0 9.500H61M0 18.500H61M0 27.500H61M0 36.500H61${n ? "" : "M12.500 0V46M24.500 0V46M36.500 0V46M48.500 0V46"}" fill="none" stroke="${line}"/>`;
  for (let r = 0; r < 5; r++) s += `<path d="M3 ${r * 9 + 4.500}H61" stroke="${r ? "#000" : dash}" stroke-dasharray="7 5"/>`;
  return `<div class="thumb${n === 2 ? " sel" : ""}"><svg width="61" height="46" viewBox="0 0 61 46">${s}</svg></div>`;
}).join("");
```
